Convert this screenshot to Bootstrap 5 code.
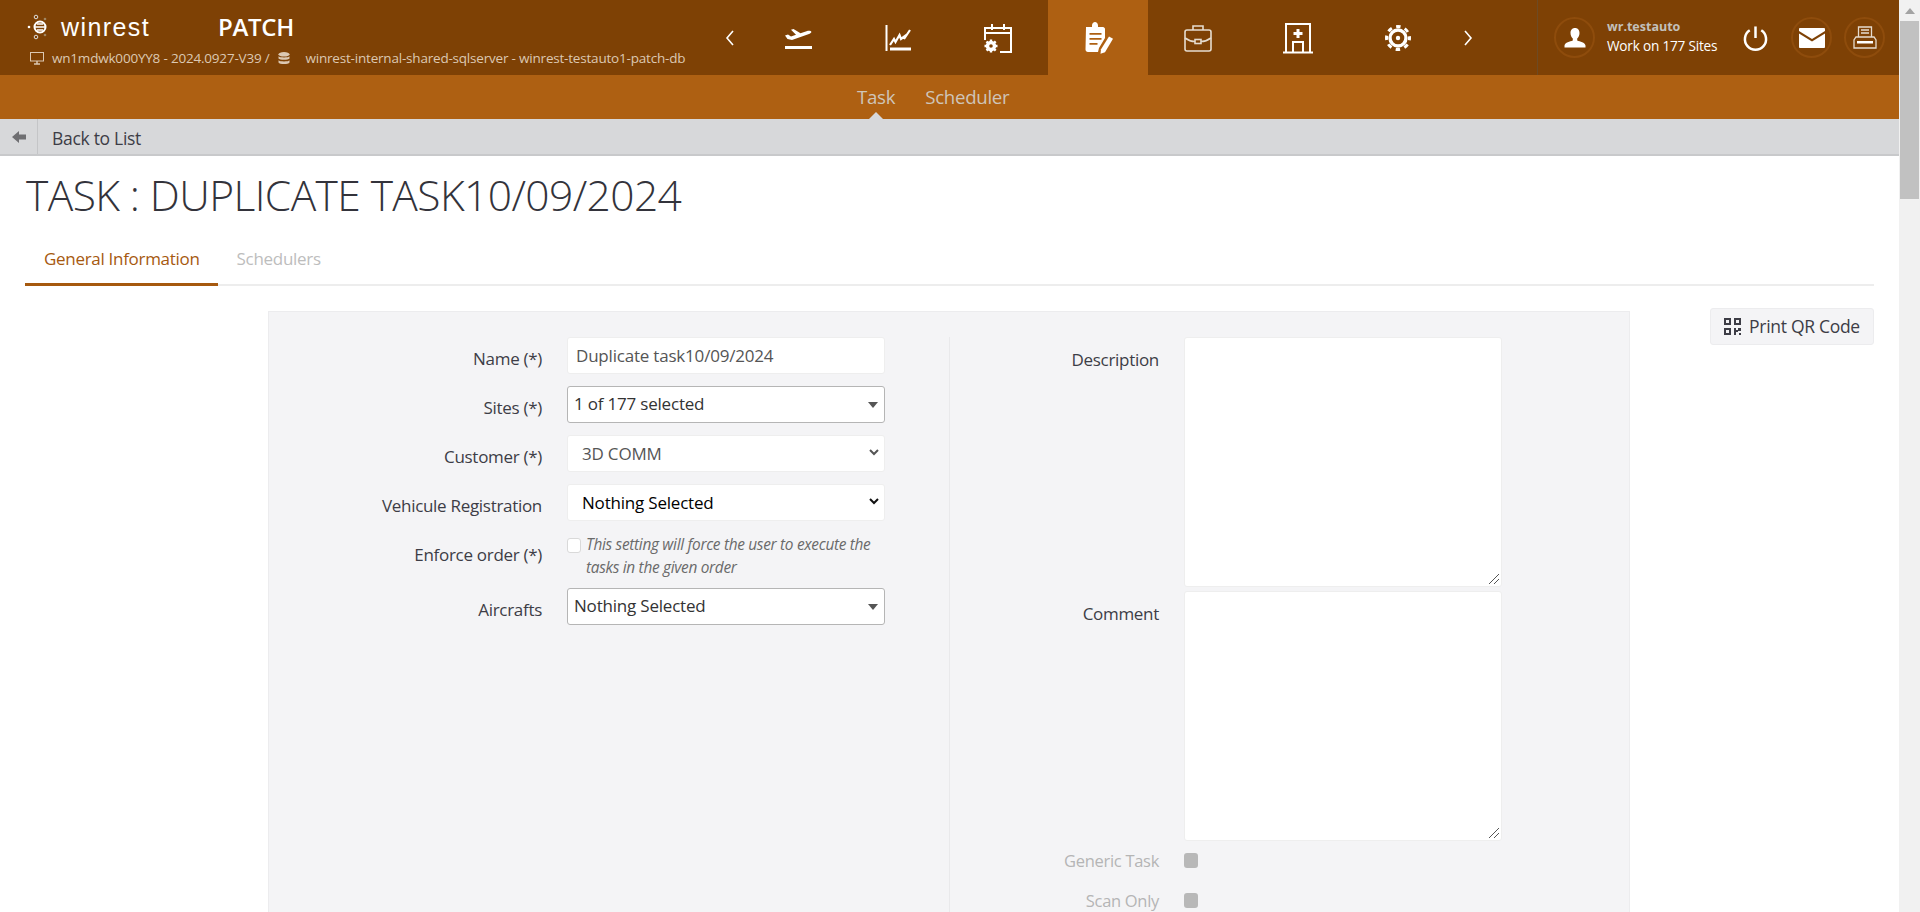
<!DOCTYPE html>
<html lang="en">
<head>
<meta charset="UTF-8">
<title>Task</title>
<link href="https://cdn.jsdelivr.net/npm/bootstrap@5.3.2/dist/css/bootstrap.min.css" rel="stylesheet">
<style>
    html, body { height: 100%; overflow: hidden; }
    body { font-family: "Open Sans", "Liberation Sans", sans-serif; font-size: 15px; color: #3d3d46; background: #fff; }

    /* top bar */
    .wr-top { height: 75px; background: #7e4105; color: #fff; }
    .wr-brand { width: 698px; padding: 11px 0 0 27px; }
    .wr-logo-ico { margin-right: 9px; }
    .wr-logo-text { font-family: "Liberation Sans", sans-serif; font-size: 25px; line-height: 26px; letter-spacing: 1.4px; width: 157px; }
    .wr-module { font-size: 24px; line-height: 32px; font-weight: 600; letter-spacing: -.3px; }
    .wr-path { font-size: 13.5px; line-height: 16px; color: #dcc8b2; margin: 7px 0 0 3px; letter-spacing: -.2px; white-space: nowrap; }
    .wr-nav-ico { width: 100px; height: 75px; }
    .wr-nav-ico.active { background: #ae6012; }
    .wr-chev { width: 50px; height: 75px; }
    .wr-chev.prev { padding-left: 14px; }
    .wr-chev.next { padding-right: 10px; }
    .wr-user { width: 362px; margin-left: auto; border-left: 1px solid #6e4a23; padding-left: 16px; }
    .wr-ring { width: 41px; height: 41px; border: 2px solid #8e4c0c; border-radius: 50%; flex-shrink: 0; }
    .wr-user-txt { margin-left: 12px; width: 111px; white-space: nowrap; }
    .wr-user-name { font-size: 12.5px; font-weight: 700; color: #c3c0bb; line-height: 16px; }
    .wr-user-sites { font-size: 13.6px; color: #fff; line-height: 21px; letter-spacing: -.2px; }
    .wr-power { margin-left: 25px; margin-right: 23px; flex-shrink: 0; }
    .wr-ring-last { margin-left: 12px; }

    /* second bar */
    .wr-sub { height: 44px; background: #ae6012; padding-left: 857px; gap: 30px; }
    .wr-sub a { font-size: 18.7px; color: #cfc5b9; text-decoration: none; line-height: 44px; letter-spacing: -.3px; position: relative; }
    .wr-sub a.active::after { content: ""; position: absolute; left: 50%; margin-left: -7px; bottom: 0; border: 7px solid transparent; border-top: 0; border-bottom-color: #d7d8da; }

    /* back bar */
    .wr-back { height: 37px; background: #d7d8da; border-bottom: 2px solid #c8c9cb; }
    .wr-back-ico { width: 38px; border-right: 1px solid #c4c5c7; }
    .wr-back span { font-size: 17.5px; color: #3d3d46; padding: 3px 0 0 14px; letter-spacing: -.3px; }

    h1.wr-title { font-weight: 300; font-size: 42.5px; line-height: 56px; margin: 0; padding: 11px 0 0 26px; height: 70px; letter-spacing: -.58px; color: #33333b; }

    .wr-tabs { margin: 10px 25px 0; height: 50px; border-bottom: 2px solid #ededed; }
    .wr-tab { font-size: 17px; line-height: 45px; padding: 0 19px; height: 50px; color: #bdbdbd; letter-spacing: -.3px; }
    .wr-tab.active { color: #a6590f; border-bottom: 3px solid #a6590f; padding-right: 18px; }

    /* form panel */
    .wr-body { padding: 25px 25px 0 268px; }
    .wr-panel { width: 1362px; height: 700px; background: #f4f4f6; border: 1px solid #ececee; padding-top: 25px; flex-shrink: 0; }
    .wr-col-l { width: 681px; border-right: 1px solid #e9e9eb; min-height: 680px; }
    .wr-row { margin-bottom: 12px; }
    .wr-row-hint { margin-bottom: 9px; }
    .wr-label { width: 298px; padding: 0 25px 0 0; text-align: right; font-size: 17px; letter-spacing: -.3px; line-height: 24px; color: #3d3d46; flex-shrink: 0; margin-top: 10px; margin-bottom: 0; white-space: nowrap; }
    .wr-control { width: 318px; height: 37px; background: #fff; border: 1px solid #eeeeee; border-radius: 3px; font-size: 17px; letter-spacing: -.2px; line-height: 35px; padding: 0 8px; color: #555; }
    .wr-control.wr-pick { border: 1px solid #b5b5b5; padding: 0 6px; line-height: 33px; color: #333; position: relative; }
    .wr-pick::after { content: ""; position: absolute; right: 6px; top: 15px; border: 5px solid transparent; border-bottom: 0; border-top: 6px solid #555; }
    .wr-sel { padding-left: 14px; position: relative; }
    .wr-sel svg { position: absolute; right: 4px; top: 12px; }
    .wr-check { width: 14px; height: 15px; background: #fff; border: 1px solid #d9d9d9; border-radius: 3px; flex-shrink: 0; margin-top: 5px; }
    .wr-hint { font-style: italic; font-size: 15.4px; line-height: 23px; color: #6a6a6a; padding-left: 5px; letter-spacing: -.3px; width: 304px; }
    .wr-area { width: 318px; height: 250px; background: #fff; border: 1px solid #eeeeee; border-radius: 3px; position: relative; }
    .wr-area svg { position: absolute; right: 1px; bottom: 1px; }
    .wr-r-label { width: 234px; padding-right: 25px; text-align: right; font-size: 17px; letter-spacing: -.3px; line-height: 24px; margin: 11px 0 0; flex-shrink: 0; color: #3d3d46; }
    .wr-r-label.wr-muted { color: #b5b5b5; font-size: 16.5px; margin-top: 0; }
    .wr-box { width: 14px; height: 15px; border-radius: 3px; background: #b8b8b8; margin-top: 4px; }
    .wr-flag-first { margin-top: 8px; }
    .wr-qr { width: 164px; height: 37px; margin-left: 80px; margin-top: -3px; background: #f4f4f6; border: 1px solid #ececee; border-radius: 3px; font-size: 17.5px; letter-spacing: -.3px; color: #3d3d46; white-space: nowrap; }

    /* fake scrollbar, the window is photographed with one */
    .wr-scroll { width: 21px; background: #f1f1f1; flex-shrink: 0; }
    .wr-scroll-up { height: 21px; }
    .wr-scroll-thumb { height: 178px; margin: 0 1px; background: #c1c1c1; }
</style>
</head>
<body class="d-flex">
<div class="flex-grow-1 overflow-hidden">

    <div class="wr-top d-flex">
        <div class="wr-brand">
            <div class="d-flex align-items-center">
                <svg width="25" height="26" viewBox="0 0 25 26" fill="none" class="wr-logo-ico">
                    <circle cx="13" cy="13" r="5.5" stroke="#fff" stroke-width="2"/>
                    <path d="M8 13h10M10 10h6M10 16h6" stroke="#fff" stroke-width="1.5"/>
                    <circle cx="2" cy="13" r="1.3" fill="#fff"/><circle cx="9" cy="3" r="1.8" stroke="#ddd"/><circle cx="9" cy="23" r="1.8" stroke="#ddd"/><circle cx="18" cy="5" r="1.3" fill="#a08560"/><circle cx="18" cy="21" r="1.3" fill="#a08560"/>
                </svg>
                <div class="wr-logo-text">winrest</div>
                <div class="wr-module">PATCH</div>
            </div>
            <div class="wr-path d-flex align-items-center">
                <svg width="14" height="13" viewBox="0 0 14 13" class="me-2" fill="none" stroke="#dcc8b2"><rect x=".5" y=".5" width="13" height="8.5"/><path d="M7 9v2.500M4 12h6" stroke-width="1.5"/></svg>
                <span>wn1mdwk000YY8 - 2024.0927-V39 /</span>
                <svg width="12" height="13" viewBox="0 0 12 13" class="mx-2" fill="#dcc8b2"><ellipse cx="6" cy="2.3" rx="5.5" ry="2.3"/><path d="M.5 4.200c1 1.600 10 1.600 11 0v2.300c-1 1.800-10 1.800-11 0zM.5 8.200c1 1.600 10 1.600 11 0v2.300c-1 2-10 2-11 0z"/></svg>
                <span class="ms-2">winrest-internal-shared-sqlserver - winrest-testauto1-patch-db</span>
            </div>
        </div>
        <div class="d-flex">
            <div class="wr-chev prev d-flex align-items-center justify-content-center"><svg width="10" height="18" viewBox="0 0 10 18" fill="none" stroke="#fff" stroke-width="1.6"><path d="M8 2 2 9l6 7"/></svg></div>
            <div class="wr-nav-ico d-flex align-items-center justify-content-center"><svg width="30" height="24" viewBox="0 0 30 24" fill="#fff"><path d="M2 9.500 5 8.500l3 2 5-1.800-5-5 2.500-.8 7 4.300 6-2c2.500-.8 4.500-.4 4.800.5.300.9-1 1.800-3 2.600L9 14 4.500 13zM2 20h27v3H2z"/></svg></div>
            <div class="wr-nav-ico d-flex align-items-center justify-content-center"><svg width="28" height="28" viewBox="0 0 28 28" fill="none" stroke="#fff"><path d="M2.500 1v26" stroke-width="2"/><path d="M6 25h21" stroke-width="3"/><path d="M6 21l4-6 1.500 3 4-7 1.500 4 4-3-1 3 6-9" stroke-width="2.200"/></svg></div>
            <div class="wr-nav-ico d-flex align-items-center justify-content-center"><svg width="30" height="30" viewBox="0 0 30 30" fill="none" stroke="#fff" stroke-width="2"><path d="M2 17V5h26v24H17M2 10h26M9 1v6M21 1v6"/><circle cx="8" cy="23" r="3.500" stroke-width="3.400"/><path d="M8 16.500v2.500M8 27v2.500M1.500 23H4M12 23h2.500M3.500 18.500l1.700 1.700M11 26l1.700 1.700M3.500 27.500 5.200 26M11 20l1.700-1.700" stroke-width="2.400"/></svg></div>
            <div class="wr-nav-ico active d-flex align-items-center justify-content-center"><svg width="32" height="32" viewBox="0 0 32 32" fill="#fff"><path d="M4 5h6V3.500C10 1.500 11.500 0 13 0s3 1.500 3 3.500V5h5c1 0 2 1 2 2v9l-6 10-1 4H6c-1.500 0-2.500-1-2.500-2.500z"/><path d="M7.500 11h12v1.800h-12zM7.500 16h12v1.800h-12zM7.500 21h8v1.800h-8z" fill="#ae6012"/><path d="M27 14.500l4 2.300-8 13.500-4.500 1.500.5-4.500z"/></svg></div>
            <div class="wr-nav-ico d-flex align-items-center justify-content-center"><svg width="30" height="28" viewBox="0 0 30 28" fill="none" stroke="#e6dccf" stroke-width="1.6"><rect x="2" y="6" width="26" height="21" rx="2"/><path d="M10 6V2h10v4M2 14c4 3 8 3.500 10 3.500M28 14c-4 3-8 3.500-10 3.500"/><rect x="12" y="15.500" width="6" height="4"/></svg></div>
            <div class="wr-nav-ico d-flex align-items-center justify-content-center"><svg width="32" height="32" viewBox="0 0 32 32" fill="none" stroke="#fff" stroke-width="2"><path d="M4 30V2h24v28M1 30.500h30"/><path d="M16 7v9M11.500 11.500h9" stroke-width="3"/><path d="M11 30V20h10v10"/></svg></div>
            <div class="wr-nav-ico d-flex align-items-center justify-content-center"><svg width="28" height="28" viewBox="0 0 28 28" fill="none" stroke="#fff"><circle cx="14" cy="14" r="8" stroke-width="3.400"/><circle cx="14" cy="14" r="11.500" stroke-width="3" stroke-dasharray="4.500 4.530" stroke-dashoffset="2.250"/><circle cx="14" cy="14" r="2.200" fill="#fff" stroke="none"/></svg></div>
            <div class="wr-chev next d-flex align-items-center justify-content-center"><svg width="10" height="18" viewBox="0 0 10 18" fill="none" stroke="#fff" stroke-width="1.6"><path d="M2 2l6 7-6 7"/></svg></div>
        </div>
        <div class="wr-user d-flex align-items-center">
            <div class="wr-ring d-flex align-items-center justify-content-center"><svg width="22" height="22" viewBox="0 0 22 22" fill="#fff"><path d="M11 1c3 0 4.500 2.300 4.500 5 0 2.500-1 4.500-2.300 5.500v2c2.800 1 7.800 2 8.300 5v2H.5v-2c.5-3 5.500-4 8.300-5v-2C7.500 10.500 6.500 8.500 6.500 6c0-2.700 1.500-5 4.500-5z"/></svg></div>
            <div class="wr-user-txt"><div class="wr-user-name">wr.testauto</div><div class="wr-user-sites">Work on 177 Sites</div></div>
            <svg class="wr-power" width="25" height="26" viewBox="0 0 26 26" fill="none" stroke="#fff" stroke-width="2.6"><path d="M13 1v12"/><path d="M7 5a11 11 0 1 0 12 0"/></svg>
            <div class="wr-ring d-flex align-items-center justify-content-center"><svg width="26" height="20" viewBox="0 0 26 20" fill="#fff"><path d="M1 0h24c.5 0 1 .5 1 1v2L13 11 0 3V1c0-.5.5-1 1-1zM0 5.500 13 13.500 26 5.500V19c0 .5-.5 1-1 1H1c-.5 0-1-.5-1-1z"/></svg></div>
            <div class="wr-ring wr-ring-last d-flex align-items-center justify-content-center"><svg width="24" height="24" viewBox="0 0 24 24" fill="none" stroke="#e6dccf" stroke-width="1.3"><path d="M5.500 11V1h13v10M8 4h8M8 7h8"/><path d="M3 11h18l2 3v8H1v-8z"/><rect x="4" y="15" width="16" height="2.500" fill="#fff" stroke="none"/></svg></div>
        </div>
    </div>

    <div class="wr-sub d-flex">
        <a href="#" class="active">Task</a>
        <a href="#">Scheduler</a>
    </div>

    <div class="wr-back d-flex align-items-center">
        <div class="wr-back-ico h-100 d-flex align-items-center justify-content-center"><svg width="14" height="12" viewBox="0 0 14 12" fill="#6f6f72"><path d="M0 6 7 0v3.500h7v5H7V12z"/></svg></div>
        <span>Back to List</span>
    </div>

    <h1 class="wr-title">TASK : DUPLICATE TASK10/09/2024</h1>

    <div class="wr-tabs d-flex">
        <div class="wr-tab active">General Information</div>
        <div class="wr-tab">Schedulers</div>
    </div>

    <div class="wr-body d-flex align-items-start">
        <div class="wr-panel d-flex">
            <div class="wr-col-l">
                <div class="wr-row d-flex"><label class="wr-label">Name (*)</label><div class="wr-control">Duplicate task10/09/2024</div></div>
                <div class="wr-row d-flex"><label class="wr-label">Sites (*)</label><div class="wr-control wr-pick">1 of 177 selected</div></div>
                <div class="wr-row d-flex"><label class="wr-label">Customer (*)</label><div class="wr-control wr-sel">3D COMM<svg width="12" height="10" viewBox="0 0 12 10" fill="none" stroke="#555" stroke-width="2"><path d="M2 2l4 4 4-4"/></svg></div></div>
                <div class="wr-row d-flex"><label class="wr-label">Vehicule Registration</label><div class="wr-control wr-sel text-black">Nothing Selected<svg width="12" height="10" viewBox="0 0 12 10" fill="none" stroke="#111" stroke-width="2"><path d="M2 2l4 4 4-4"/></svg></div></div>
                <div class="wr-row wr-row-hint d-flex"><label class="wr-label">Enforce order (*)</label><div class="d-flex"><div class="wr-check"></div><div class="wr-hint">This setting will force the user to execute the tasks in the given order</div></div></div>
                <div class="wr-row d-flex"><label class="wr-label">Aircrafts</label><div class="wr-control wr-pick">Nothing Selected</div></div>
            </div>
            <div>
                <div class="d-flex mb-1"><label class="wr-r-label">Description</label><div class="wr-area"><svg width="12" height="12" viewBox="0 0 12 12" stroke="#555"><path d="M1 11 11 1M6 11l5-5"/></svg></div></div>
                <div class="d-flex"><label class="wr-r-label">Comment</label><div class="wr-area"><svg width="12" height="12" viewBox="0 0 12 12" stroke="#555"><path d="M1 11 11 1M6 11l5-5"/></svg></div></div>
                <div class="d-flex wr-flag-first"><label class="wr-r-label wr-muted">Generic Task</label><div class="wr-box"></div></div>
                <div class="d-flex mt-3"><label class="wr-r-label wr-muted">Scan Only</label><div class="wr-box"></div></div>
            </div>
        </div>
        <div class="wr-qr d-flex align-items-center justify-content-center">
            <svg width="17" height="17" viewBox="0 0 17 17" class="me-2" fill="#3d3d46"><path fill-rule="evenodd" d="M0 0h7v7H0zM2 2v3h3V2zM10 0h7v7h-7zM12 2v3h3V2zM0 10h7v7H0zM2 12v3h3v-3z"/><path d="M10 10h2v2h2v-2h3v3h-3v1h-2v3h-2zM15 15h2v2h-2z"/></svg>
            Print QR Code
        </div>
    </div>
</div>
<div class="wr-scroll">
    <div class="wr-scroll-up d-flex align-items-center justify-content-center"><svg width="10" height="6" viewBox="0 0 10 6" fill="#a3a3a3"><path d="M0 6 5 0l5 6z"/></svg></div>
    <div class="wr-scroll-thumb"></div>
</div>
<script src="https://cdn.jsdelivr.net/npm/bootstrap@5.3.2/dist/js/bootstrap.bundle.min.js"></script>
</body>
</html>
